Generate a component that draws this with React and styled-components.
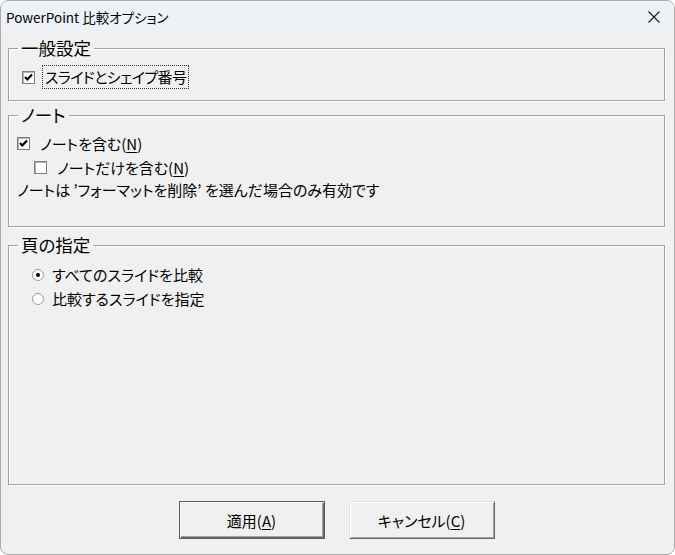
import React from 'react';
import styled, { createGlobalStyle } from 'styled-components';

const GlobalStyle = createGlobalStyle`
  html, body {
    margin: 0;
    padding: 0;
    background: #ffffff;
  }
  body {
    font-family: "Noto Sans CJK JP", "Noto Sans", sans-serif;
    color: #000;
  }
`;

const Window = styled.div`
  box-sizing: border-box;
  width: 675px;
  height: 555px;
  border: 1px solid #ababab;
  border-radius: 8px;
  overflow: hidden;
  background: #f0f0f0;
  display: flex;
  flex-direction: column;
`;

const TitleBar = styled.div`
  height: 32px;
  flex: none;
  background: #eef2f6;
  display: flex;
  align-items: center;
  justify-content: space-between;
  padding: 0 14px 0 5px;
`;

const Title = styled.span`
  font-family: "Noto Sans CJK JP", sans-serif;
  font-size: 13.5px;
  line-height: 18px;
  font-feature-settings: "palt";
  margin-top: -1px;
`;

const Content = styled.div`
  flex: 1;
  display: flex;
  flex-direction: column;
  padding: 4px 9px 15px 7px;
  min-height: 0;
`;

const Group = styled.fieldset`
  margin: ${p => p.$gap || 0}px 0 0 0;
  padding: 0;
  min-width: 0;
  border: 1px solid #a0a0a0;
  box-shadow: inset 1px 1px 0 #ffffff, 1px 1px 0 #ffffff;
  ${p => p.$grow && 'flex: 1;'}
`;

const Legend = styled.legend`
  margin-left: 9px;
  padding: 0 3px;
  font-size: 17.5px;
  line-height: 22px;
  font-feature-settings: "palt";
`;

const GroupBody = styled.div`
  padding: ${p => p.$pad};
  display: flex;
  flex-direction: column;
`;

const Row = styled.div`
  display: flex;
  align-items: center;
  height: ${p => p.$h || 22}px;
  margin-left: ${p => p.$indent || 0}px;
  font-size: 15px;
  line-height: 20px;
  font-feature-settings: "palt";
  white-space: nowrap;
`;

const Box = styled.span`
  box-sizing: border-box;
  width: 13px;
  height: 13px;
  border: 1px solid #7f7f7f;
  box-shadow: inset 1px 1px 0 #b4b4b4;
  background: #ffffff;
  display: inline-flex;
  align-items: center;
  justify-content: center;
  flex: none;
  margin-right: ${p => p.$space || 8}px;
`;

const Focus = styled.span`
  outline: 1px dotted #333;
  outline-offset: 1px;
  padding: 0 1px;
  letter-spacing: -0.6px;
`;

const Key = styled.span`
  text-decoration: underline;
  text-underline-offset: 2px;
`;

const Radio = styled.svg`
  flex: none;
  margin-right: 8px;
`;

const Note = styled.div`
  font-size: 15px;
  line-height: 22px;
  font-feature-settings: "palt";
  white-space: nowrap;
`;

const Buttons = styled.div`
  flex: none;
  display: flex;
  justify-content: center;
  gap: 24px;
  margin-top: 16px;
`;

const Button = styled.button`
  box-sizing: border-box;
  width: 146px;
  height: 38px;
  background: #f0f0f0;
  font-family: "Noto Sans CJK JP", sans-serif;
  font-size: 15px;
  font-feature-settings: "palt";
  color: #000;
  padding: 0;
  border: 1px solid ${p => (p.$primary ? '#5a5a5a' : '#e3e3e3')};
  ${p => !p.$primary && 'border-right-color: #696969; border-bottom-color: #696969;'}
  box-shadow: ${p =>
    p.$primary
      ? 'inset 1px 1px 0 #ffffff, inset -1px -1px 0 #696969, inset -2px -2px 0 #a0a0a0'
      : 'inset 1px 1px 0 #ffffff, inset -1px -1px 0 #a0a0a0'};
`;

function CheckBox({ checked, space }) {
  return (
    <Box $space={space}>
      {checked && (
        <svg width="9" height="9" viewBox="0 0 9 9">
          <path d="M1 4 L3.4 6.5 L8 1.6" fill="none" stroke="#000" strokeWidth="2.2" />
        </svg>
      )}
    </Box>
  );
}

function RadioDot({ checked }) {
  return (
    <Radio width="12" height="12" viewBox="0 0 12 12">
      <circle cx="6" cy="6" r="5.5" fill="#fff" stroke="#9c9c9c" />
      {checked && <circle cx="6" cy="6" r="2" fill="#000" />}
    </Radio>
  );
}

export default function App() {
  return (
    <>
      <GlobalStyle />
      <Window>
        <TitleBar>
          <Title>PowerPoint 比較オプション</Title>
          <svg width="12" height="12" viewBox="0 0 12 12">
            <path d="M0.5 0.5 L11.5 11.5 M11.5 0.5 L0.5 11.5" stroke="#1a1a1a" strokeWidth="1.1" />
          </svg>
        </TitleBar>
        <Content>
          <Group>
            <Legend>一般設定</Legend>
            <GroupBody $pad="7px 0 12px 13px">
              <Row>
                <CheckBox checked space={9} />
                <Focus>スライドとシェイプ番号</Focus>
              </Row>
            </GroupBody>
          </Group>

          <Group $gap={3}>
            <Legend>ノート</Legend>
            <GroupBody $pad="5px 0 25px 8px">
              <Row $h={25}>
                <CheckBox checked space={10} />
                ノートを含む(<Key>N</Key>)
              </Row>
              <Row $h={23} $indent={17}>
                <CheckBox space={10} />
                ノートだけを含む(<Key>N</Key>)
              </Row>
              <Note>ノートは ’フォーマットを削除’ を選んだ場合のみ有効です</Note>
            </GroupBody>
          </Group>

          <Group $gap={7} $grow>
            <Legend>頁の指定</Legend>
            <GroupBody $pad="7px 0 0 23px">
              <Row $h={24}>
                <RadioDot checked />
                すべてのスライドを比較
              </Row>
              <Row $h={24}>
                <RadioDot />
                比較するスライドを指定
              </Row>
            </GroupBody>
          </Group>

          <Buttons>
            <Button $primary>適用(<Key>A</Key>)</Button>
            <Button>キャンセル(<Key>C</Key>)</Button>
          </Buttons>
        </Content>
      </Window>
    </>
  );
}
